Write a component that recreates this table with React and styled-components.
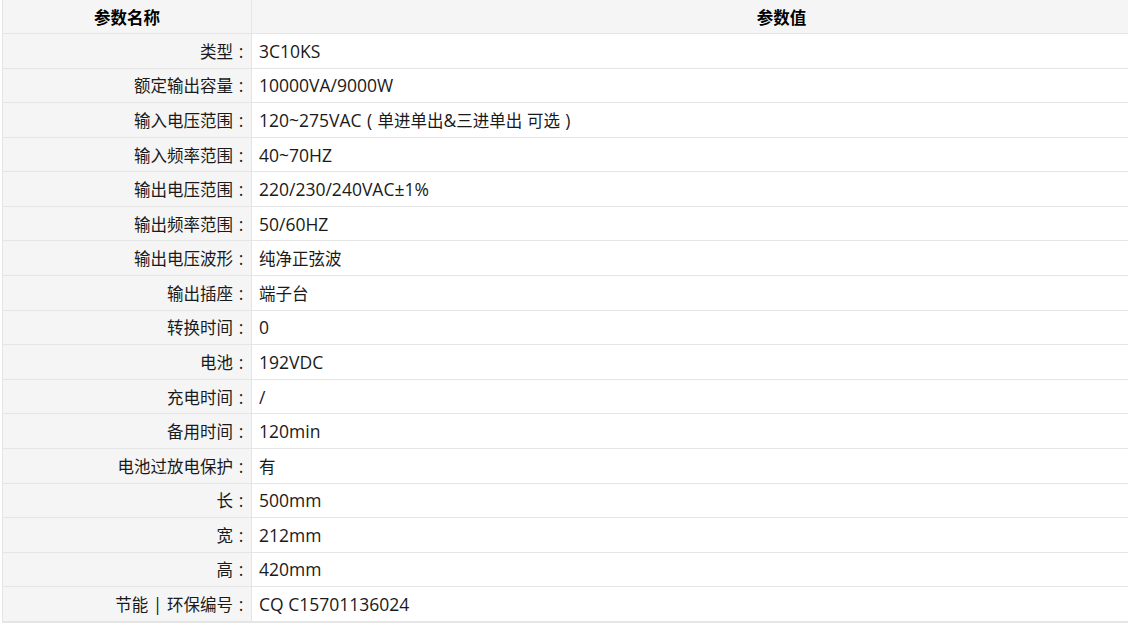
import React from 'react';
import styled, { createGlobalStyle } from 'styled-components';

const GlobalStyle = createGlobalStyle`
  html, body {
    margin: 0;
    padding: 0;
    overflow: hidden;
    background: #fff;
  }
  body {
    font-family: "Noto Sans CJK SC", "Noto Sans", sans-serif;
  }
`;

const Page = styled.div`
  padding-left: 2px;
`;

const Table = styled.div`
  width: 1309px;
  border-bottom: 1px solid #e5e5e5;
`;

const Row = styled.div`
  display: grid;
  grid-template-columns: 250px 1fr;
  box-sizing: border-box;
  height: ${props => (props.header ? '34px' : '34.59px')};
  border-bottom: 1px solid #e5e5e5;
  font-size: 16.5px;
  line-height: 20px;
  color: ${props => (props.header ? '#000' : '#1a1a1a')};
  font-weight: ${props => (props.header ? 700 : 400)};
`;

const NameCell = styled.div`
  display: flex;
  align-items: center;
  justify-content: ${props => (props.header ? 'center' : 'flex-end')};
  box-sizing: border-box;
  padding-right: ${props => (props.header ? '0' : '2px')};
  background: #f5f5f5;
  border-left: 1px solid #e5e5e5;
  border-right: 1px solid #e5e5e5;
  white-space: nowrap;
`;

const ValueCell = styled.div`
  display: flex;
  align-items: center;
  justify-content: ${props => (props.header ? 'center' : 'flex-start')};
  padding-left: ${props => (props.header ? '0' : '7px')};
  background: ${props => (props.header ? '#f5f5f5' : '#fff')};
  white-space: nowrap;
`;

const Latin = styled.span`
  font-family: "Open Sans", "Noto Sans", sans-serif;
  font-size: 17.5px;
  white-space: pre;
`;

// full-width punctuation, glyph centred in its em box
const Punct = styled.span`
  display: inline-block;
  width: 16px;
  text-align: center;
  font-family: "Open Sans", "Noto Sans", sans-serif;
  font-size: 17.5px;
`;

const halfOf = { '（': '(', '）': ')', '：': ':' };

// split text into CJK / full-width punctuation / latin runs
function Mixed({ text }) {
  const parts = text.split(/([\u4e00-\u9fff]+|[（）：])/).filter(Boolean);
  return parts.map((p, i) => {
    if (/^[\u4e00-\u9fff]+$/.test(p)) return <span key={i}>{p}</span>;
    if (halfOf[p]) return <Punct key={i}>{halfOf[p]}</Punct>;
    return <Latin key={i}>{p}</Latin>;
  });
}

const specs = [
  ['类型', '3C10KS'],
  ['额定输出容量', '10000VA/9000W'],
  ['输入电压范围', '120~275VAC（单进单出&三进单出 可选）'],
  ['输入频率范围', '40~70HZ'],
  ['输出电压范围', '220/230/240VAC±1%'],
  ['输出频率范围', '50/60HZ'],
  ['输出电压波形', '纯净正弦波'],
  ['输出插座', '端子台'],
  ['转换时间', '0'],
  ['电池', '192VDC'],
  ['充电时间', '/'],
  ['备用时间', '120min'],
  ['电池过放电保护', '有'],
  ['长', '500mm'],
  ['宽', '212mm'],
  ['高', '420mm'],
  ['节能 | 环保编号', 'CQ C15701136024'],
];

export default function App() {
  return (
    <Page>
      <GlobalStyle />
      <Table>
        <Row header>
          <NameCell header>参数名称</NameCell>
          <ValueCell header>参数值</ValueCell>
        </Row>
        {specs.map(([name, value]) => (
          <Row key={name}>
            <NameCell>
              <Mixed text={name + '：'} />
            </NameCell>
            <ValueCell>
              <Mixed text={value} />
            </ValueCell>
          </Row>
        ))}
      </Table>
    </Page>
  );
}
